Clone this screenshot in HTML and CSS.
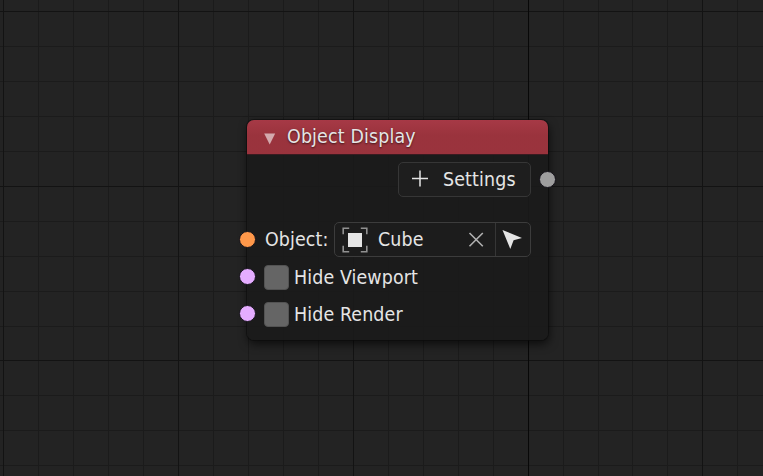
FILE: index.html
```html
<!DOCTYPE html>
<html lang="en">
<head>
<meta charset="utf-8">
<title>Node Editor</title>
<link rel="stylesheet" href="styles.css">
</head>
<body>
<main class="canvas">
  <svg class="grid" width="763" height="476" shape-rendering="crispEdges" aria-hidden="true">
    <path class="minor" d="M38.5 0V476M73.5 0V476M108.5 0V476M143.5 0V476M213.5 0V476M248.5 0V476M283.5 0V476M318.5 0V476M388.5 0V476M423.5 0V476M458.5 0V476M493.5 0V476M563.5 0V476M598.5 0V476M632.5 0V476M667.5 0V476M737.5 0V476M0 46.5H763M0 81.5H763M0 116.5H763M0 151.5H763M0 221.5H763M0 256.5H763M0 291.5H763M0 326.5H763M0 395.5H763M0 430.5H763M0 465.5H763"/>
    <path class="major" d="M3.5 0V476M178.5 0V476M353.5 0V476M702.5 0V476M0 11.5H763M0 186.5H763M0 360.5H763"/>
    <path class="axis" d="M528.5 0V476"/>
  </svg>
  <section class="node">
    <header class="node-header">
      <svg class="collapse" width="12" height="12" viewBox="0 0 12 12"><path d="M.2.5h11L5.7 11.6z"/></svg>
      <h1>Object Display</h1>
    </header>
    <div class="row output">
      <button class="button">
        <svg class="plus" width="17" height="17" viewBox="0 0 17 17"><path d="M8 .5v16M0 8.5h16"/></svg>
        <span>Settings</span>
      </button>
      <i class="socket settings"></i>
    </div>
    <div class="row object">
      <i class="socket orange"></i>
      <label>Object:</label>
      <div class="picker">
        <svg width="26" height="26" viewBox="0 0 26 26">
          <path class="corners" d="M1.2 7.2v-6h6M18.8 1.2h6v6M24.8 18.8v6h-6M7.2 24.8h-6v-6"/>
          <path class="solid" d="M6 6h14v14H6z"/>
        </svg>
        <span class="value">Cube</span>
        <svg class="clear" width="16" height="16" viewBox="0 0 16 16"><path d="M1.5 1l13.3 13.3M14.8 1L1.5 14.3"/></svg>
        <span class="eyedropper">
          <svg width="21" height="21" viewBox="0 0 21 21"><path class="solid" d="M.5.9L20 8.9 11.6 11.3 8.3 20z"/></svg>
        </span>
      </div>
    </div>
    <div class="row check">
      <i class="socket violet"></i>
      <span class="box"></span><label>Hide Viewport</label>
    </div>
    <div class="row check">
      <i class="socket violet"></i>
      <span class="box"></span><label>Hide Render</label>
    </div>
  </section>
</main>
</body>
</html>
```
FILE: styles.css
```css
* { box-sizing: border-box; }
body {
  margin: 0;
  background: #232323;
  color: #e5e5e5;
  font: 19.4px/24px "DejaVu Sans Condensed", "DejaVu Sans", sans-serif;
  font-stretch: condensed;
}
.canvas { position: relative; width: 763px; height: 476px; overflow: hidden; }
.grid { display: block; }
.grid path { fill: none; stroke-width: 1; }
.minor { stroke: #1b1b1b; }
.major { stroke: #131313; }
.axis { stroke: #080808; }
.node {
  position: absolute;
  left: 247px;
  top: 120px;
  width: 301px;
  height: 220px;
  border-radius: 7px;
  background: rgba(27, 27, 27, .9);
  box-shadow: 0 0 0 1px rgba(12, 12, 12, .6), 1px 4px 10px rgba(0, 0, 0, .65);
}
.node-header {
  display: flex;
  align-items: center;
  height: 34px;
  padding-left: 17px;
  border-radius: 7px 7px 0 0;
  background: linear-gradient(rgba(171, 58, 71, .97), rgba(158, 52, 62, .97) 45%);
  box-shadow: 0 1px #3a1b20;
}
.collapse { margin-top: 3px; fill: #d3a9ad; }
h1 {
  margin: 0 0 0 11px;
  font-size: inherit;
  font-weight: 400;
  letter-spacing: .15px;
  text-shadow: 0 1px 2px rgba(0, 0, 0, .6);
}
.row { position: relative; display: flex; align-items: center; padding: 0 17px; }
.output { justify-content: flex-end; height: 35px; margin-top: 8px; }
.button {
  display: flex;
  align-items: center;
  width: 133px;
  height: 35px;
  padding: 0 0 0 13px;
  border: 1px solid #363636;
  border-radius: 5px;
  background: #1e1e1e;
  color: inherit;
  font: inherit;
  letter-spacing: .15px;
}
.button span { margin-left: 14px; }
.plus { margin-top: -2px; fill: none; stroke: #e5e5e5; stroke-width: 1.5; }
.object { height: 35px; margin-top: 25px; }
.object label { width: 70px; padding-left: 1px; }
label, .value { letter-spacing: .12px; }
.picker {
  display: flex;
  align-items: center;
  width: 197px;
  height: 35px;
  padding-left: 7px;
  border: 1px solid #3c3c3c;
  border-radius: 5px;
  background: #1c1c1c;
}
.corners { fill: none; stroke: #919191; stroke-width: 1.6; }
.solid { fill: #e5e5e5; }
.value { width: 90px; margin-left: 10px; }
.clear { fill: none; stroke: #b0b0b0; stroke-width: 1.6; }
.eyedropper {
  display: flex;
  align-items: center;
  height: 33px;
  margin-left: 11px;
  padding-left: 6px;
  border-left: 1px solid #363636;
}
.check { height: 25px; margin-top: 8px; }
.check + .check { margin-top: 12px; }
.box {
  width: 25px;
  height: 25px;
  margin-right: 5px;
  border: 1px solid #535353;
  border-radius: 4px;
  background: #656565;
}
.socket {
  position: absolute;
  left: -8px;
  top: 50%;
  width: 17px;
  height: 17px;
  margin-top: -9px;
  border: 1px solid #15121a;
  border-radius: 50%;
}
.socket.settings { right: -8px; left: auto; background: #9e9e9e; }
.orange { background: #ff984a; }
.violet { margin-top: -9.5px; background: #e5adff; }
```
